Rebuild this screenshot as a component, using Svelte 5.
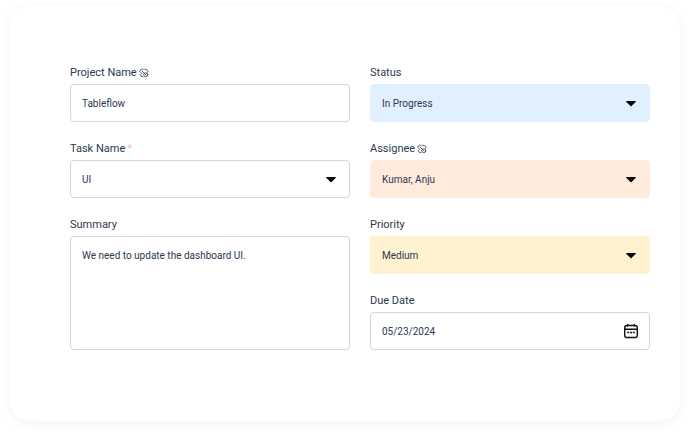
<script>
  let form = $state({
    project: 'Tableflow',
    task: 'UI',
    summary: 'We need to update the dashboard UI.',
    status: 'In Progress',
    assignee: 'Kumar, Anju',
    priority: 'Medium',
    dueDate: '05/23/2024'
  })
</script>

{#snippet linkIcon()}
  <svg class="link-icon" viewBox="0 0 20 20" aria-hidden="true">
    <path d="M9.5 4A4 4 0 1 0 4 9.5L6.500 12" />
    <circle cx="13.5" cy="13.5" r="4" />
    <path d="M6 6l8 8M11.500 2.500l4 .5 2.500 3.500-1 2M2.500 13l1.500 3.500 4 1" />
  </svg>
{/snippet}

{#snippet dropdown(id, key, options, tone)}
  <div class="control {tone}">
    <select {id} bind:value={form[key]}>
      {#each options as option}
        <option>{option}</option>
      {/each}
    </select>
    <svg class="caret" viewBox="0 -2 10 8" aria-hidden="true">
      <path d="M.8 0h8.4a.5.5 0 0 1 .4.900L5.500 5a.7.7 0 0 1-1 0L.4.900A.5.5 0 0 1 .8 0z" />
    </svg>
  </div>
{/snippet}

<form class="card">
  <div class="column">
    <div class="field">
      <label for="project">Project Name {@render linkIcon()}</label>
      <div class="control">
        <input id="project" type="text" bind:value={form.project} />
      </div>
    </div>
    <div class="field">
      <label for="task">Task Name <span class="required">*</span></label>
      {@render dropdown('task', 'task', ['UI'], '')}
    </div>
    <div class="field grow">
      <label for="summary">Summary</label>
      <div class="control grow">
        <textarea id="summary" bind:value={form.summary}></textarea>
      </div>
    </div>
  </div>

  <div class="column">
    <div class="field">
      <label for="status">Status</label>
      {@render dropdown('status', 'status', ['In Progress'], 'blue')}
    </div>
    <div class="field">
      <label for="assignee">Assignee {@render linkIcon()}</label>
      {@render dropdown('assignee', 'assignee', ['Kumar, Anju'], 'peach')}
    </div>
    <div class="field">
      <label for="priority">Priority</label>
      {@render dropdown('priority', 'priority', ['Medium'], 'yellow')}
    </div>
    <div class="field">
      <label for="due">Due Date</label>
      <div class="control">
        <input id="due" type="text" bind:value={form.dueDate} />
        <button type="button" class="calendar" aria-label="Open calendar">
          <svg viewBox="0 0 16 16" aria-hidden="true">
            <rect x="1.7" y="2.5" width="12.6" height="12" rx="2.2" />
            <path d="M1.7 6.2h12.6M4.8 1.5v1.5M11.2 1.5v1.5" />
            <path class="dots" d="M4.2 9.5h2M7 9.5h2M9.8 9.5h2" />
          </svg>
        </button>
      </div>
    </div>
  </div>
</form>

<style>
  :global(body) {
    background: #fff;
    color: #2b3850;
    font-family: Roboto, "Liberation Sans", sans-serif;
  }

  .card {
    display: grid;
    grid-template-columns: 1fr 1fr;
    gap: 20px;
    margin: 6px 10px 14px;
    padding: 59px 30px 71px 60px;
    border-radius: 20px;
    background: #fff;
    box-shadow: 0 2px 12px rgba(0, 0, 0, 0.05);
  }

  .column {
    display: flex;
    flex-direction: column;
    gap: 19px;
    min-width: 0;
  }

  .field {
    display: flex;
    flex-direction: column;
    gap: 3px;
  }

  .grow {
    flex: 1;
  }

  label {
    display: flex;
    align-items: center;
    gap: 2px;
    font-size: 11px;
    line-height: 16px;
  }

  .required {
    color: #f3c3b0;
  }

  .link-icon {
    width: 10px;
    height: 10px;
    fill: none;
    stroke: #2b3850;
    stroke-width: 1.6;
    stroke-linecap: round;
  }

  .control {
    display: flex;
    align-items: center;
    position: relative;
    box-sizing: border-box;
    min-height: 38px;
    border: 1px solid #d5d5d7;
    border-radius: 4px;
    background: #fff;
  }

  .control:focus-within {
    border-color: #8fa3c4;
  }

  .blue {
    border-color: #e0f0ff;
    background: #e0f0ff;
  }

  .peach {
    border-color: #ffeadc;
    background: #ffeadc;
  }

  .yellow {
    border-color: #fff2d1;
    background: #fff2d1;
  }

  input,
  select,
  textarea {
    appearance: none;
    box-sizing: border-box;
    width: 100%;
    min-width: 0;
    margin: 0;
    padding: 11px 11px 9px;
    border: 0;
    outline: 0;
    background: none;
    color: inherit;
    font-family: inherit;
    font-size: 10px;
    line-height: 16px;
  }

  textarea {
    align-self: stretch;
    resize: none;
  }

  .caret {
    position: absolute;
    right: 13px;
    width: 10px;
    height: 8px;
    fill: #000;
    pointer-events: none;
  }

  .calendar {
    display: flex;
    flex: none;
    margin: 0 10px 0 0;
    padding: 0;
    border: 0;
    background: none;
    cursor: pointer;
  }

  .calendar svg {
    width: 16px;
    height: 16px;
    fill: none;
    stroke: #111;
    stroke-width: 1.4;
    stroke-linecap: round;
  }

  .calendar .dots {
    stroke-width: 1.6;
    stroke-linecap: butt;
  }
</style>
